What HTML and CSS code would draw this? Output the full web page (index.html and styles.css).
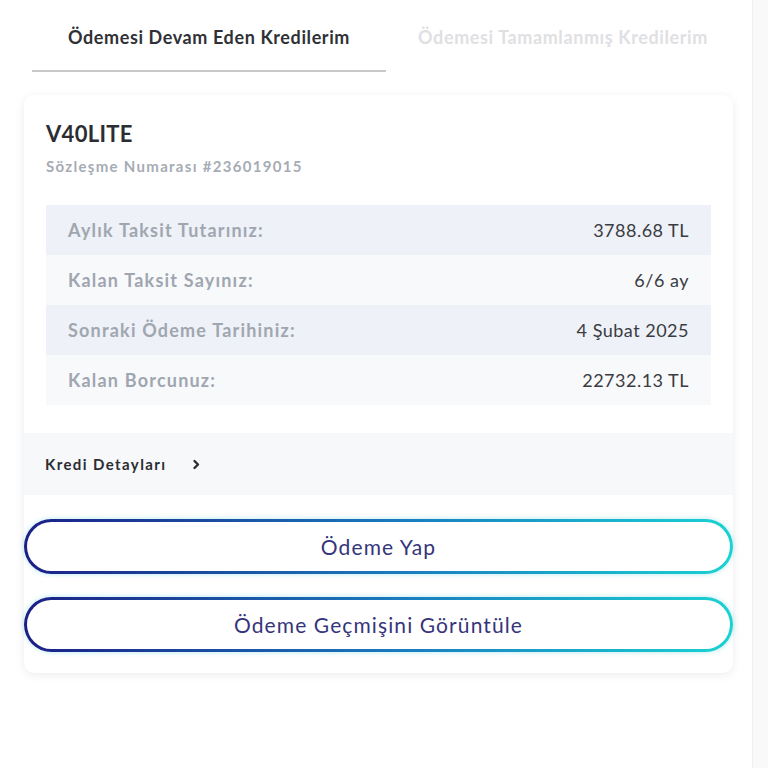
FILE: index.html
```html
<!DOCTYPE html>
<html lang="tr">
<head>
  <meta charset="UTF-8">
  <meta name="viewport" content="width=device-width, initial-scale=1.0">
  <title>Kredilerim</title>
  <link rel="stylesheet" href="styles.css">
</head>
<body>
  <div class="page">
    <div class="tabs">
      <div class="tab active">Ödemesi Devam Eden Kredilerim</div>
      <div class="tab">Ödemesi Tamamlanmış Kredilerim</div>
    </div>

    <div class="card">
      <div class="card-head">
        <h2>V40LITE</h2>
        <div class="contract">Sözleşme Numarası #236019015</div>
      </div>

      <div class="info-table">
        <div class="row">
          <span class="label">Aylık Taksit Tutarınız:</span>
          <span class="value">3788.68 TL</span>
        </div>
        <div class="row">
          <span class="label">Kalan Taksit Sayınız:</span>
          <span class="value">6/6 ay</span>
        </div>
        <div class="row">
          <span class="label">Sonraki Ödeme Tarihiniz:</span>
          <span class="value">4 Şubat 2025</span>
        </div>
        <div class="row">
          <span class="label">Kalan Borcunuz:</span>
          <span class="value">22732.13 TL</span>
        </div>
      </div>

      <a class="details" href="#">
        Kredi Detayları
        <svg width="10" height="12" viewBox="0 0 10 12"><path d="M3.5 3 L7 6.5 L3.5 10" fill="none" stroke="#2b2d33" stroke-width="2.4" stroke-linecap="round" stroke-linejoin="round"/></svg>
      </a>

      <div class="actions">
        <button class="btn">Ödeme Yap</button>
        <button class="btn">Ödeme Geçmişini Görüntüle</button>
      </div>
    </div>
  </div>
  <div class="edge"></div>
</body>
</html>
```

FILE: styles.css
```css
body {
  margin: 0;
  font-family: Lato, "Noto Sans", sans-serif;
  background-color: #fff;
  color: #2b2d33;
  display: flex;
  min-height: 768px;
}

.page {
  width: 752px;
}

.edge {
  flex: 1;
  background-color: #f9f9fa;
  border-left: 1px solid #efeff1;
}

.tabs {
  display: flex;
  padding: 26px 0 0 32px;
}

.tab {
  width: 354px;
  text-align: center;
  font-size: 18px;
  font-weight: 700;
  letter-spacing: 0.6px;
  color: #dfe0e3;
  padding-bottom: 22px;
}

.tab.active {
  color: #2f3136;
  border-bottom: 2px solid #c8c8c8;
}

.card {
  margin: 23px 0 0 24px;
  width: 709px;
  background-color: #fff;
  border-radius: 10px;
  box-shadow: 0 2px 10px rgba(0, 0, 0, 0.08);
  padding-bottom: 21px;
}

.card-head {
  padding: 25px 22px 30px;
}

.card-head h2 {
  margin: 0;
  font-size: 22px;
  font-weight: 700;
  letter-spacing: 0.3px;
  color: #2b2d33;
}

.contract {
  margin-top: 10px;
  font-size: 15px;
  font-weight: 700;
  letter-spacing: 1.3px;
  color: #a6acb5;
}

.info-table {
  margin: 0 22px;
}

.row {
  display: flex;
  justify-content: space-between;
  align-items: center;
  height: 50px;
  padding: 0 22px;
  background-color: #f8f9fb;
}

.row:nth-child(odd) {
  background-color: #eef1f7;
}

.label {
  font-size: 18px;
  font-weight: 700;
  letter-spacing: 1.2px;
  color: #a0a6b0;
}

.value {
  font-size: 18px;
  letter-spacing: 0.5px;
  color: #3a3c42;
}

.details {
  display: flex;
  align-items: center;
  gap: 24px;
  margin-top: 28px;
  height: 62px;
  padding: 0 21px;
  background-color: #f7f8fa;
  font-size: 15px;
  font-weight: 700;
  letter-spacing: 1.4px;
  color: #2b2d33;
  text-decoration: none;
}

.actions {
  display: flex;
  flex-direction: column;
  gap: 23px;
  margin-top: 24px;
}

.btn {
  height: 55px;
  border-radius: 28px;
  border: 3px solid transparent;
  background: linear-gradient(#fff, #fff) padding-box,
              linear-gradient(90deg, #1b1f86, #1a7fc0 55%, #1ad2d2) border-box;
  box-shadow: 0 0 5px rgba(30, 190, 210, 0.35);
  font-family: Lato, "Noto Sans", sans-serif;
  font-size: 21px;
  letter-spacing: 1.1px;
  color: #35357a;
  cursor: pointer;
}
```
